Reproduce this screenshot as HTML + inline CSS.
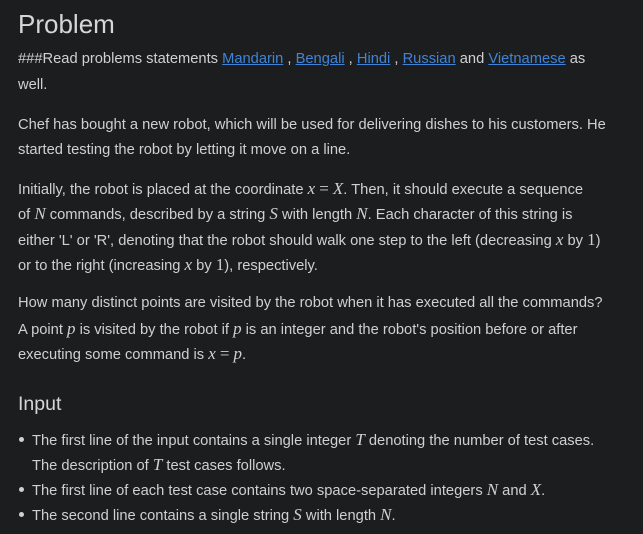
<!DOCTYPE html>
<html><head><meta charset="utf-8"><style>
html,body{margin:0;padding:0;background:#1c1d1f;width:643px;height:534px;overflow:hidden}
body{font-family:"Liberation Sans",sans-serif;color:#cfd0d2;font-size:14.7px;}
.l{position:absolute;left:18px;white-space:nowrap;line-height:20px}
h1{position:absolute;left:18px;top:9px;margin:0;font-size:26px;font-weight:normal;color:#d6d6d6}
h2{position:absolute;left:18px;top:393px;margin:0;font-size:19.5px;font-weight:normal;color:#d6d6d6}
a{color:#3f84d9;text-decoration:underline}
i.m{font-family:"Liberation Serif",serif;font-size:17px;font-style:italic}
.n{font-family:"Liberation Serif",serif;font-size:17px}
.b{position:absolute;left:19px;width:5px;height:5px;border-radius:50%;background:#cfd0d2}
</style></head><body>
<h1>Problem</h1>
<div class="l" style="top:49px">###Read problems statements <a>Mandarin</a> , <a>Bengali</a> , <a>Hindi</a> , <a>Russian</a> and <a>Vietnamese</a> as</div>
<div class="l" style="top:75px">well.</div>
<div class="l" style="top:115px">Chef has bought a new robot, which will be used for delivering dishes to his customers. He</div>
<div class="l" style="top:140px">started testing the robot by letting it move on a line.</div>
<div class="l" style="top:179px">Initially, the robot is placed at the coordinate <i class="m">x</i> <span class="n">=</span> <i class="m">X</i>. Then, it should execute a sequence</div>
<div class="l" style="top:204px">of <i class="m">N</i> commands, described by a string <i class="m">S</i> with length <i class="m">N</i>. Each character of this string is</div>
<div class="l" style="top:230px">either 'L' or 'R', denoting that the robot should walk one step to the left (decreasing <i class="m">x</i> by <span class="n">1</span>)</div>
<div class="l" style="top:255px">or to the right (increasing <i class="m">x</i> by <span class="n">1</span>), respectively.</div>
<div class="l" style="top:293px">How many distinct points are visited by the robot when it has executed all the commands?</div>
<div class="l" style="top:319px">A point <i class="m">p</i> is visited by the robot if <i class="m">p</i> is an integer and the robot's position before or after</div>
<div class="l" style="top:344px">executing some command is <i class="m">x</i> <span class="n">=</span> <i class="m">p</i>.</div>
<h2>Input</h2>
<div class="b" style="top:437px"></div>
<div class="l" style="left:32px;top:430px">The first line of the input contains a single integer <i class="m">T</i> denoting the number of test cases.</div>
<div class="l" style="left:32px;top:455px">The description of <i class="m">T</i> test cases follows.</div>
<div class="b" style="top:487px"></div>
<div class="l" style="left:32px;top:480px">The first line of each test case contains two space-separated integers <i class="m">N</i> and <i class="m">X</i>.</div>
<div class="b" style="top:512px"></div>
<div class="l" style="left:32px;top:505px">The second line contains a single string <i class="m">S</i> with length <i class="m">N</i>.</div>
</body></html>
